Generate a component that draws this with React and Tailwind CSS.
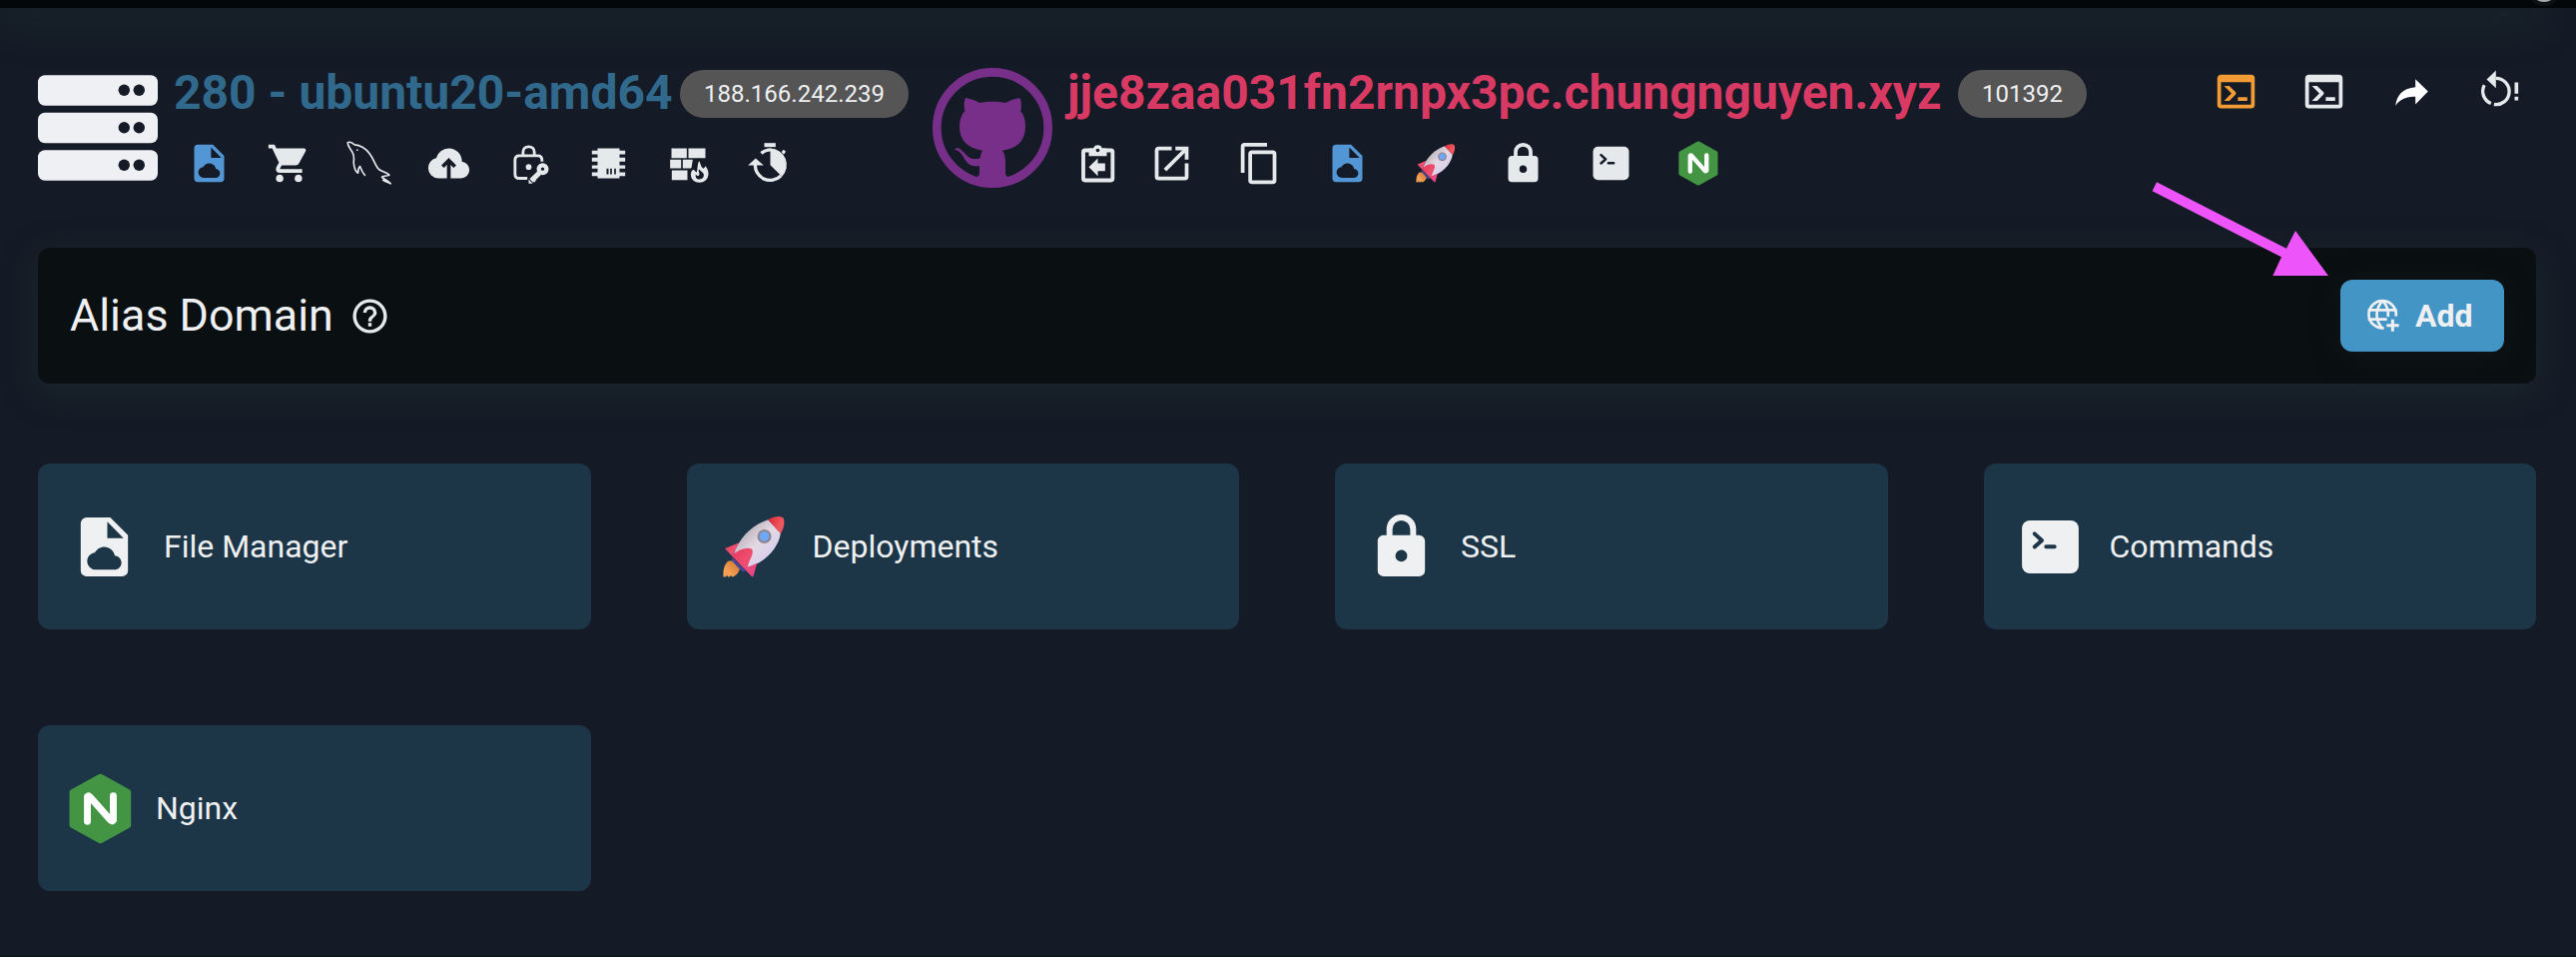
import React from "react";

const CONSOLE =
  "M20,19V7H4V19H20M20,3A2,2 0 0,1 22,5V19A2,2 0 0,1 20,21H4A2,2 0 0,1 2,19V5C2,3.89 2.9,3 4,3H20M13,17V15H18V17H13M9.58,13L5.57,9H8.4L11.7,12.3C12.09,12.69 12.09,13.33 11.7,13.72L8.42,17H5.59L9.58,13Z";
const CART =
  "M17,18C15.89,18 15,18.89 15,20A2,2 0 0,0 17,22A2,2 0 0,0 19,20C19,18.89 18.1,18 17,18M1,2V4H3L6.6,11.59L5.24,14.04C5.09,14.32 5,14.65 5,15A2,2 0 0,0 7,17H19V15H7.42A0.25,0.25 0 0,1 7.17,14.75C7.17,14.7 7.18,14.66 7.2,14.63L8.1,13H15.55C16.3,13 16.96,12.58 17.3,11.97L20.88,5.5C20.95,5.34 21,5.17 21,5A1,1 0 0,0 20,4H5.21L4.27,2M7,18C5.89,18 5,18.89 5,20A2,2 0 0,0 7,22A2,2 0 0,0 9,20C9,18.89 8.1,18 7,18Z";
const CLOUD_UP =
  "M11 20H6.5Q4.22 20 2.61 18.43 1 16.85 1 14.58 1 12.63 2.17 11.1 3.35 9.57 5.25 9.15 5.88 6.85 7.75 5.43 9.63 4 12 4 14.93 4 16.96 6.04 19 8.07 19 11 20.73 11.2 21.86 12.5 23 13.78 23 15.5 23 17.38 21.69 18.69 20.38 20 18.5 20H13V12.85L14.6 14.4L16 13L12 9L8 13L9.4 14.4L11 12.85Z";
const LOCK =
  "M12,17A2,2 0 0,0 14,15C14,13.89 13.1,13 12,13A2,2 0 0,0 10,15A2,2 0 0,0 12,17M18,8A2,2 0 0,1 20,10V20A2,2 0 0,1 18,22H6A2,2 0 0,1 4,20V10C4,8.89 4.9,8 6,8H7V6A5,5 0 0,1 12,1A5,5 0 0,1 17,6V8H18M12,3A3,3 0 0,0 9,6V8H15V6A3,3 0 0,0 12,3Z";
const OPEN =
  "M14,3V5H17.59L7.76,14.83L9.17,16.24L19,6.41V10H21V3M19,19H5V5H12V3H5C3.89,3 3,3.9 3,5V19A2,2 0 0,0 5,21H19A2,2 0 0,0 21,19V12H19V19Z";
const COPY =
  "M19,21H8V7H19M19,5H8A2,2 0 0,0 6,7V21A2,2 0 0,0 8,23H19A2,2 0 0,0 21,21V7A2,2 0 0,0 19,5M16,1H4A2,2 0 0,0 2,3V17H4V3H16V1Z";

function Glyph({ d, className = "size-[45px]" }) {
  return (
    <svg viewBox="0 0 24 24" fill="currentColor" className={"shrink-0 " + className}>
      <path d={d} />
    </svg>
  );
}

function FileCloud({ className = "size-[45px]", hole = "#141b26" }) {
  return (
    <svg viewBox="0 0 24 24" fill="currentColor" className={"shrink-0 " + className}>
      <path d="M13,9H18.5L13,3.5V9M6,2H14L20,8V20A2,2 0 0,1 18,22H6A2,2 0 0,1 4,20V4A2,2 0 0,1 6,2Z" />
      <path
        transform="translate(6.2 10.07) scale(.483)"
        fill={hole}
        d="M19.35 10.04C18.67 6.59 15.64 4 12 4 9.11 4 6.6 5.64 5.35 8.04 2.34 8.36 0 10.91 0 14c0 3.31 2.69 6 6 6h13c2.76 0 5-2.24 5-5 0-2.64-2.05-4.78-4.65-4.96z"
      />
    </svg>
  );
}

function Dolphin() {
  return (
    <svg viewBox="1042.5 424.5 135 135" className="size-[45px] shrink-0" fill="none" stroke="currentColor" strokeWidth="5" strokeLinejoin="round">
      <path d="M1066,436C1086,437 1102,449 1113,464C1125,480 1129,500 1140,510C1150,518 1162,518 1171,527C1164,530 1155,529 1149,533C1156,541 1167,543 1175,553C1167,548 1158,547 1151,541" />
      <path d="M1066,436C1060,429 1050,426 1046,430C1046,443 1056,449 1061,460C1069,475 1062,485 1065,497C1067,508 1070,518 1077,521C1077,512 1079,505 1083,501C1087,512 1091,521 1099,529" />
      <circle cx="1075" cy="452" r="2.6" fill="currentColor" stroke="none" />
    </svg>
  );
}

function LockKey() {
  return (
    <svg viewBox="142.5 304.5 135 135" className="size-[45px] shrink-0" fill="none" stroke="currentColor" strokeWidth="8.5">
      <path d="M250,367V362Q250,349 237,349H182Q169,349 169,362V404Q169,417 182,417H206" />
      <path d="M193,348V338C193,329 200,322 210,322S227,329 227,338V348" />
      <circle cx="210" cy="383" r="8.5" fill="currentColor" stroke="none" />
      <circle cx="252" cy="389" r="11.5" strokeWidth="13" />
      <path d="M242,401L218,424" strokeWidth="15" />
      <path d="M210,420L222,433H210ZM224,420L232,422L228,430Z" fill="currentColor" stroke="none" />
    </svg>
  );
}

function Chip() {
  return (
    <svg viewBox="382.5 304.5 135 135" className="size-[45px] shrink-0" fill="currentColor">
      <path d="M417,327H483V334H500V345H483V355H500V367H483V378H500V388H483V399H500V410H483V417H417V410H400V399H417V388H400V378H417V367H400V355H417V345H400V334H417Z" />
      <path d="M444,388h6v17h-6zM455,388h5v17h-5zM467,388h5v17h-5z" fill="#141b26" />
    </svg>
  );
}

function WallFire() {
  return (
    <svg viewBox="622.5 304.5 135 135" className="size-[45px] shrink-0" fill="currentColor">
      <path d="M639,327h46v29h-46zM690,327h51v29h-51zM635,361h33v26h-33zM673,361h30l-4,26h-26zM640,393h47v29h-47z" />
      <path
        stroke="#141b26"
        strokeWidth="6"
        d="M722,360C730,366 727,378 735,384C738,382 738,378 739,374C748,383 754,394 753,405C752,422 740,433 723,433C706,433 694,422 694,406C694,394 701,388 706,383C708,390 710,392 713,394C716,382 712,370 722,360Z"
      />
      <path d="M722,390C717,396 727,402 721,409C717,411 714,408 712,404C710,414 715,420 723,420C732,420 737,414 736,406C735,399 728,397 722,390Z" fill="#141b26" />
    </svg>
  );
}

function TimerBack() {
  return (
    <svg viewBox="862.5 304.5 135 135" className="size-[45px] shrink-0" fill="currentColor">
      <path d="M918,311h34v12h-34z" />
      <path d="M936,377V327A50,50 0 0 1 971,412Z" />
      <path d="M971,338l5,-6l5,5l-5,7z" stroke="currentColor" strokeWidth="3" />
      <path d="M892,357L916,378H869Z" />
      <path d="M891,372A45,45 0 0 0 968,409M909,342A45,45 0 0 1 938,331" fill="none" stroke="currentColor" strokeWidth="10" />
    </svg>
  );
}

function ClipboardBack() {
  return (
    <svg viewBox="532.5 304.5 135 135" className="size-[45px] shrink-0" fill="currentColor">
      <rect x="556.5" y="333" width="88" height="90" rx="5" fill="none" stroke="currentColor" strokeWidth="11.5" />
      <path d="M573,327H587A13.5,13.5 0 0 1 613,327H627V350H573Z" />
      <circle cx="600" cy="333" r="5.5" fill="#141b26" />
      <path d="M573,383L600,357V372H622V395H600V410Z" />
    </svg>
  );
}

function Rocket({ className = "size-[45px]" }) {
  return (
    <svg viewBox="106.5 304.5 135 135" className={"shrink-0 " + className}>
      <defs>
        <linearGradient id="hull" x1="0" y1="0" x2="1" y2="1">
          <stop offset=".2" stopColor="#b9aeb4" />
          <stop offset=".5" stopColor="#e2d9e4" />
          <stop offset=".85" stopColor="#d9cdf0" />
        </linearGradient>
        <linearGradient id="fin" x1="0" y1="0" x2="1" y2="1">
          <stop offset="0" stopColor="#e8365a" />
          <stop offset=".5" stopColor="#ee4f70" />
          <stop offset="1" stopColor="#e8408c" />
        </linearGradient>
        <linearGradient id="nose" x1="0" y1="0" x2="1" y2=".5">
          <stop offset=".2" stopColor="#dc3340" />
          <stop offset=".8" stopColor="#f0565f" />
        </linearGradient>
        <linearGradient id="flame" x1="0" y1="1" x2="1" y2="0">
          <stop offset=".3" stopColor="#f4a054" />
          <stop offset="1" stopColor="#c9702f" />
        </linearGradient>
      </defs>
      <path d="M126,399C119,405 116,416 117,429H121L124,426L126,429H129L131,426L134,429C142,427 147,420 148,414L134,398Z" fill="url(#flame)" />
      <path d="M133,391L134,399L153,419L160,418Z" fill="#46479a" />
      <path d="M120,375L147,364L134,390Z" fill="url(#fin)" />
      <path d="M202,320C172,331 148,352 136,388L162,411C192,405 222,376 226,346Z" fill="url(#hull)" />
      <path d="M202,320C214,313 226,312 231,317C235,324 232,337 226,347Z" fill="url(#nose)" />
      <path d="M133,389C145,377 162,371 171,376C177,385 166,396 163,411L181,403L174,428Q172,430 169,426Z" fill="url(#fin)" />
      <circle cx="195" cy="352" r="11.2" fill="#6da9f8" stroke="#8d8795" strokeWidth="4.2" />
    </svg>
  );
}

function ConsoleCard({ className = "size-[45px]", hole = "#141b26" }) {
  return (
    <svg viewBox="634.5 304.5 135 135" className={"shrink-0 " + className}>
      <rect x="648" y="321.5" width="108" height="101" rx="15" fill="currentColor" />
      <path d="M672,347L686,359.5L672,372M694,371.5H710" fill="none" stroke={hole} strokeWidth="7.5" strokeLinecap="round" strokeLinejoin="round" />
    </svg>
  );
}

function Nginx({ className = "ml-[2px] h-[45px] w-[40px]" }) {
  return (
    <svg viewBox="905 305 119 134" className={"shrink-0 " + className}>
      <path d="M961,307.5Q964.500,305 968,307.500L1020,336Q1022.500,338 1022.500,341V403Q1022.500,406 1020,408L968,436.500Q964.500,439 961,436.500L909,408Q906,406 906,403V341Q906,338 909,336Z" fill="#439544" />
      <path d="M940,396V349Q942,347 945,350L984,394Q987,397 989,394V348" fill="none" stroke="#fff" strokeWidth="13" strokeLinecap="round" strokeLinejoin="round" />
    </svg>
  );
}

function Share() {
  return (
    <svg viewBox="820.5 208.5 135 135" className="size-[45px] shrink-0" fill="#fff">
      <path d="M839,319C843,286 862,266 899,263V239L937,276L899,315V292C871,290 852,301 839,319Z" />
    </svg>
  );
}

function RestartAlert() {
  return (
    <svg viewBox="1084.5 208.5 135 135" className="size-[45px] shrink-0" fill="currentColor">
      <path d="M1141,213V266L1113,240Z" />
      <path d="M1141,236.500A39.500,39.500 0 1 1 1135,315M1126,312A39.500,39.500 0 0 1 1106,257" fill="none" stroke="currentColor" strokeWidth="10" />
      <path d="M1197,249h11v34h-11zM1197,292h11v11h-11z" />
    </svg>
  );
}

function ServerIcon() {
  return (
    <svg viewBox="0 0 120 106" className="mt-[5px] h-[106px] w-[120px] shrink-0">
      {[0.3, 37.8, 75.3].map((y) => (
        <g key={y}>
          <rect x="0" y={y} width="120" height="30.500" rx="7" fill="#eff0f3" />
          <circle cx="86.300" cy={y + 15} r="5.700" fill="#141b26" />
          <circle cx="101.300" cy={y + 15} r="5.700" fill="#141b26" />
        </g>
      ))}
    </svg>
  );
}

function Github() {
  return (
    <svg viewBox="102 83 360 360" className="-mt-[2px] size-[120px] shrink-0">
      <circle cx="282" cy="263" r="167" fill="none" stroke="#772f89" strokeWidth="26" />
      <path
        fill="#772f89"
        d="M200,174C215,174 232,182 244,188C265,183 300,183 321,188C335,181 350,174 365,174C370,188 369,202 367,214C377,224 381,240 381,258C381,300 360,324 312,331C319,340 321,352 321,366V398C321,405 324,409 330,411L282,430L233,411C240,409 243,405 243,398V378C225,380 210,376 200,360C193,347 185,332 169,328C170,323 180,322 187,328C203,341 210,355 225,356C235,357 243,355 245,354C246,345 248,337 253,331C205,324 183,300 183,258C183,240 188,224 199,212C196,200 196,188 200,174Z"
      />
    </svg>
  );
}

function Pill({ children, className }) {
  return (
    <span className={"flex h-12 items-center justify-center rounded-full bg-[#555555] text-2xl text-[#eff0f2] " + className}>
      {children}
    </span>
  );
}

function Card({ icon, label }) {
  return (
    <div className="flex h-[166px] items-center gap-6 rounded-xl bg-[#1c3647] pl-[31px] text-[32px] text-[#eff0f2]">
      {icon}
      <span>{label}</span>
    </div>
  );
}

export default function App() {
  return (
    <div className="relative h-[958px] w-[2580px] overflow-hidden border-b border-[#0a1018] bg-[#141b26] font-['Roboto',sans-serif] text-[#e6e9ec]">
      <div className="mr-10 h-2 bg-[#030709] shadow-[40px_0_0_0_#030709,0_10px_36px_4px_rgba(36,50,54,0.65)]" />
      <div className="absolute -top-[30px] left-[2530px] size-9 rounded-full border-4 border-[#0d1114] bg-[#a9abad]" />

      <header className="flex h-[240px] items-start pt-[62px] pr-[54px] pl-[38px]">
        <div className="flex w-[896px] gap-[13px]">
          <ServerIcon />
          <div className="flex flex-col gap-[23px]">
            <div className="flex h-12 items-center">
              <h1 className="-mt-[3px] w-[510px] pl-[3px] text-5xl font-bold whitespace-nowrap text-[#31698c]">280 - ubuntu20-amd64</h1>
              <Pill className="w-[229px]">188.166.242.239</Pill>
            </div>
            <div className="flex gap-[35px] pl-[16px]">
              <span className="text-[#5296d5]"><FileCloud /></span>
              <Glyph d={CART} />
              <Dolphin />
              <Glyph d={CLOUD_UP} />
              <LockKey />
              <Chip />
              <WallFire />
              <TimerBack />
            </div>
          </div>
        </div>
        <div className="flex gap-[15px]">
          <Github />
          <div className="flex flex-col gap-[23px]">
            <div className="flex h-12 items-center">
              <h1 className="-mt-[3px] w-[892px] text-5xl font-bold whitespace-nowrap text-[#d93a64]">jje8zaa031fn2rnpx3pc.chungnguyen.xyz</h1>
              <Pill className="w-[129px]">101392</Pill>
            </div>
            <div className="flex gap-[43px] pl-[8px]">
              <div className="flex gap-[29px]">
                <ClipboardBack />
                <Glyph d={OPEN} />
              </div>
              <Glyph d={COPY} />
              <span className="text-[#5296d5]"><FileCloud /></span>
              <Rocket />
              <Glyph d={LOCK} />
              <ConsoleCard />
              <Nginx />
            </div>
          </div>
        </div>
        <div className="-mt-px ml-auto flex gap-[43px]">
          <span className="text-[#f39c35]"><Glyph d={CONSOLE} /></span>
          <Glyph d={CONSOLE} />
          <Share />
          <RestartAlert />
        </div>
      </header>

      <main className="flex flex-col gap-20 px-10 pl-[38px]">
        <section className="flex h-[136px] items-center rounded-xl bg-[#0a0f12] pr-8 pl-8 shadow-[0_8px_32px_rgba(36,50,54,0.5)]">
          <h2 className="text-[44.800px] text-[#eff0f2]">Alias Domain</h2>
          <svg viewBox="0 0 24 24" className="ml-[16px] size-[41px]" fill="currentColor">
            <path d="M11,18H13V16H11V18M12,2A10,10 0 0,0 2,12A10,10 0 0,0 12,22A10,10 0 0,0 22,12A10,10 0 0,0 12,2M12,20C7.590,20 4,16.410 4,12C4,7.590 7.590,4 12,4C16.410,4 20,7.590 20,12C20,16.410 16.410,20 12,20M12,6A4,4 0 0,0 8,10H10A2,2 0 0,1 12,8A2,2 0 0,1 14,10C14,12 11,11.750 11,15H13C13,12.750 16,12.500 16,10A4,4 0 0,0 12,6Z" />
          </svg>
          <button className="ml-auto flex h-[72px] w-[164px] items-center gap-[15px] rounded-xl bg-[#4395c5] pl-[26px] text-[32px] font-bold text-[#eff0f2] shadow-[0_4px_30px_rgba(40,40,40,0.25)]">
            <svg viewBox="750 900 102 102" className="size-[34px]" fill="none" stroke="currentColor" strokeWidth="8">
              <path d="M839,953A41,41 0 1 0 803,988" />
              <path d="M755,934H842M755,962H812M798,907C776,932 776,964 798,989M800,907C814,922 817,938 815,954" />
              <path d="M829,962V998M811,980H848" strokeWidth="9" />
            </svg>
            Add
          </button>
        </section>

        <section className="grid grid-cols-4 gap-24">
          <Card icon={<FileCloud className="size-[71px]" hole="#1c3647" />} label="File Manager" />
          <Card icon={<Rocket className="size-[71px]" />} label="Deployments" />
          <Card icon={<Glyph d={LOCK} className="size-[71px]" />} label="SSL" />
          <Card icon={<ConsoleCard className="size-[71px]" hole="#1c3647" />} label="Commands" />
          <Card icon={<Nginx className="h-[71px] w-[63px]" />} label="Nginx" />
        </section>
      </main>

      <svg viewBox="0 0 530 282" className="absolute top-[182px] left-[2155px] h-[94px] w-[176.667px]" fill="#ed55fa">
        <path d="M15,1L405,200L432,147L531,282H364L390,226L2,28Z" />
      </svg>
    </div>
  );
}
